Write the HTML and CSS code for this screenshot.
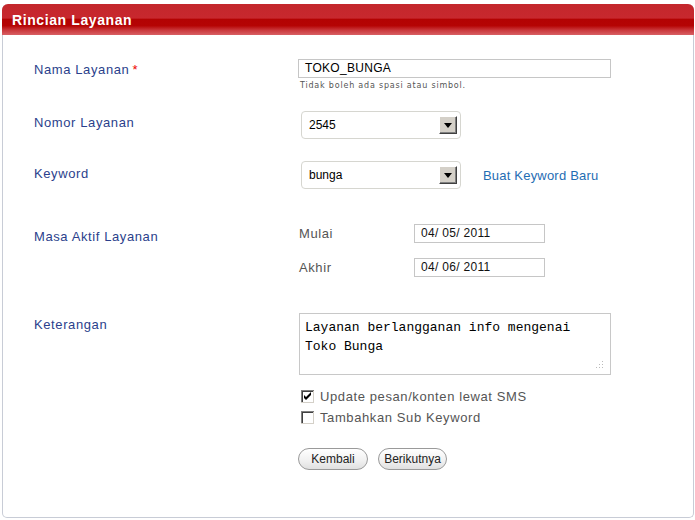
FILE: index.html
```html
<!DOCTYPE html>
<html>
<head>
    <title>Rincian Layanan</title>
    <meta charset="utf-8">
    <link rel="stylesheet" href="styles.css">
</head>
<body>
    <div class="panel">
        <div class="panel-head">Rincian Layanan</div>

        <div class="form">
            <div class="row row-nama">
                <div class="label">Nama Layanan<span class="req">*</span></div>
                <div>
                    <div class="text-input wide">TOKO_BUNGA</div>
                    <div class="hint">Tidak boleh ada spasi atau simbol.</div>
                </div>
            </div>

            <div class="row row-nomor">
                <div class="label">Nomor Layanan</div>
                <div class="field-line">
                    <div class="select">
                        <span>2545</span>
                        <span class="select-btn"><svg width="8" height="5" viewBox="0 0 8 5"><path d="M0 0h8L4 5z" fill="#000"/></svg></span>
                    </div>
                </div>
            </div>

            <div class="row row-keyword">
                <div class="label">Keyword</div>
                <div class="field-line">
                    <div class="select">
                        <span>bunga</span>
                        <span class="select-btn"><svg width="8" height="5" viewBox="0 0 8 5"><path d="M0 0h8L4 5z" fill="#000"/></svg></span>
                    </div>
                    <a class="link" href="#">Buat Keyword Baru</a>
                </div>
            </div>

            <div class="row row-masa">
                <div class="label">Masa Aktif Layanan</div>
                <div class="dates">
                    <span class="sub-label">Mulai</span>
                    <div class="text-input date">04/ 05/ 2011</div>
                    <span class="sub-label">Akhir</span>
                    <div class="text-input date">04/ 06/ 2011</div>
                </div>
            </div>

            <div class="row row-ket">
                <div class="label">Keterangan</div>
                <div>
                    <div class="textarea">
                        Layanan berlangganan info mengenai<br>Toko Bunga
                        <svg class="grip" width="8" height="8" viewBox="0 0 8 8">
                            <rect x="6" y="0" width="1" height="1" fill="#bbb"/>
                            <rect x="3" y="3" width="1" height="1" fill="#bbb"/>
                            <rect x="6" y="3" width="1" height="1" fill="#bbb"/>
                            <rect x="0" y="6" width="1" height="1" fill="#bbb"/>
                            <rect x="3" y="6" width="1" height="1" fill="#bbb"/>
                            <rect x="6" y="6" width="1" height="1" fill="#bbb"/>
                        </svg>
                    </div>

                    <div class="checks">
                        <label class="check">
                            <svg width="13" height="13" viewBox="0 0 13 13">
                                <rect x="0" y="0" width="13" height="13" fill="#fff"/>
                                <path d="M0 0h13v1H1v12H0z" fill="#808080"/>
                                <path d="M1 1h11v1H2v10H1z" fill="#404040"/>
                                <path d="M12 1h1v12H0v-1h12z" fill="#d4d0c8"/>
                                <path d="M3 5l2 2 5-5v3l-5 5-2-2z" fill="#000"/>
                            </svg>
                            Update pesan/konten lewat SMS
                        </label>
                        <label class="check">
                            <svg width="13" height="13" viewBox="0 0 13 13">
                                <rect x="0" y="0" width="13" height="13" fill="#fff"/>
                                <path d="M0 0h13v1H1v12H0z" fill="#808080"/>
                                <path d="M1 1h11v1H2v10H1z" fill="#404040"/>
                                <path d="M12 1h1v12H0v-1h12z" fill="#d4d0c8"/>
                            </svg>
                            Tambahkan Sub Keyword
                        </label>
                    </div>

                    <div class="buttons">
                        <button class="btn btn-back">Kembali</button>
                        <button class="btn btn-next">Berikutnya</button>
                    </div>
                </div>
            </div>
        </div>
    </div>
</body>
</html>
```

FILE: styles.css
```css
html, body {
    margin: 0;
    padding: 0;
    background: #fff;
}

body {
    font-family: "Liberation Sans", Arial, sans-serif;
    font-size: 13px;
}

.panel {
    margin: 4px 0 0 2px;
    width: 690px;
    height: 513px;
    border: 1px solid #c8ccd6;
    border-top: none;
    border-radius: 6px 6px 5px 5px;
}

.panel-head {
    height: 31px;
    margin: 0 -1px;
    padding-left: 10px;
    border-radius: 6px 6px 0 0;
    background: linear-gradient(#c3272c 0%, #c8282e 45%, #b30303 50%, #b50404 70%, #cb3a3e 85%, #d86064 100%);
    color: #fff;
    font-weight: bold;
    font-size: 14px;
    letter-spacing: 0.6px;
    line-height: 32px;
}

.form {
    padding: 24px 0 0 31px;
}

.row {
    display: grid;
    grid-template-columns: 264px 1fr;
    align-items: start;
}

.label {
    color: #2b3f8c;
    font-size: 13px;
    letter-spacing: 0.6px;
    line-height: 16px;
    padding-top: 3px;
}

.req {
    color: #e00;
    margin-left: 3px;
}

.row-nomor {
    margin-top: 21px;
}

.row-nomor .label,
.row-keyword .label {
    padding-top: 4px;
}

.row-keyword {
    margin-top: 22px;
}

.row-keyword .label {
    padding-top: 5px;
}

.row-masa {
    margin-top: 35px;
}

.row-masa .label {
    padding-top: 5px;
}

.row-ket {
    margin-top: 36px;
}

.row-ket .label {
    padding-top: 4px;
}

.text-input {
    box-sizing: border-box;
    height: 19px;
    border: 1px solid #c6c6c6;
    padding: 0 6px;
    line-height: 17px;
    color: #000;
    font-size: 12px;
    letter-spacing: 0.3px;
}

.wide {
    width: 313px;
}

.hint {
    margin: 3px 0 0 2px;
    font-family: "DejaVu Sans", Verdana, sans-serif;
    font-size: 8px;
    letter-spacing: 0.8px;
    color: #555;
}

.field-line {
    display: flex;
    align-items: center;
    padding-left: 3px;
}

.select {
    box-sizing: border-box;
    width: 160px;
    height: 28px;
    border: 1px solid #d6d6d0;
    border-radius: 4px;
    display: flex;
    align-items: center;
    justify-content: space-between;
    padding: 0 3px 0 7px;
    font-size: 12px;
    color: #000;
}

.row-keyword .select {
    height: 28px;
}

.select-btn {
    box-sizing: border-box;
    width: 18px;
    height: 18px;
    background: #d4d0c8;
    border: 1px solid;
    border-color: #fff #404040 #404040 #fff;
    box-shadow: inset -1px -1px 0 #808080;
    display: flex;
    align-items: center;
    justify-content: center;
}

.link {
    margin-left: 22px;
    color: #1f6db3;
    text-decoration: none;
    letter-spacing: 0.2px;
}

.dates {
    display: grid;
    grid-template-columns: 115px 131px;
    row-gap: 15px;
    align-items: center;
    padding-left: 1px;
}

.sub-label {
    color: #555;
    letter-spacing: 0.6px;
}

.date {
    width: 131px;
    color: #111;
    font-size: 12px;
}

.textarea {
    position: relative;
    box-sizing: border-box;
    width: 312px;
    height: 62px;
    margin-left: 1px;
    border: 1px solid #c8c8c8;
    padding: 4px 5px;
    font-family: "Liberation Mono", "Courier New", monospace;
    font-size: 13px;
    line-height: 19px;
    color: #000;
}

.grip {
    position: absolute;
    right: 6px;
    bottom: 5px;
}

.checks {
    margin-top: 11px;
    padding-left: 3px;
}

.check {
    display: flex;
    align-items: center;
    gap: 6px;
    height: 21px;
    color: #555;
    letter-spacing: 0.6px;
}

.buttons {
    display: flex;
    gap: 10px;
    margin-top: 20px;
}

.btn {
    height: 22px;
    padding: 0 4px;
    border: 1px solid #9a9a9a;
    border-radius: 11px;
    background: linear-gradient(#fff, #f0f0f0 60%, #e0e0e0);
    font-family: "Liberation Sans", Arial, sans-serif;
    font-size: 12px;
    color: #222;
}

.btn-back {
    width: 70px;
}

.btn-next {
    width: 69px;
}
```
